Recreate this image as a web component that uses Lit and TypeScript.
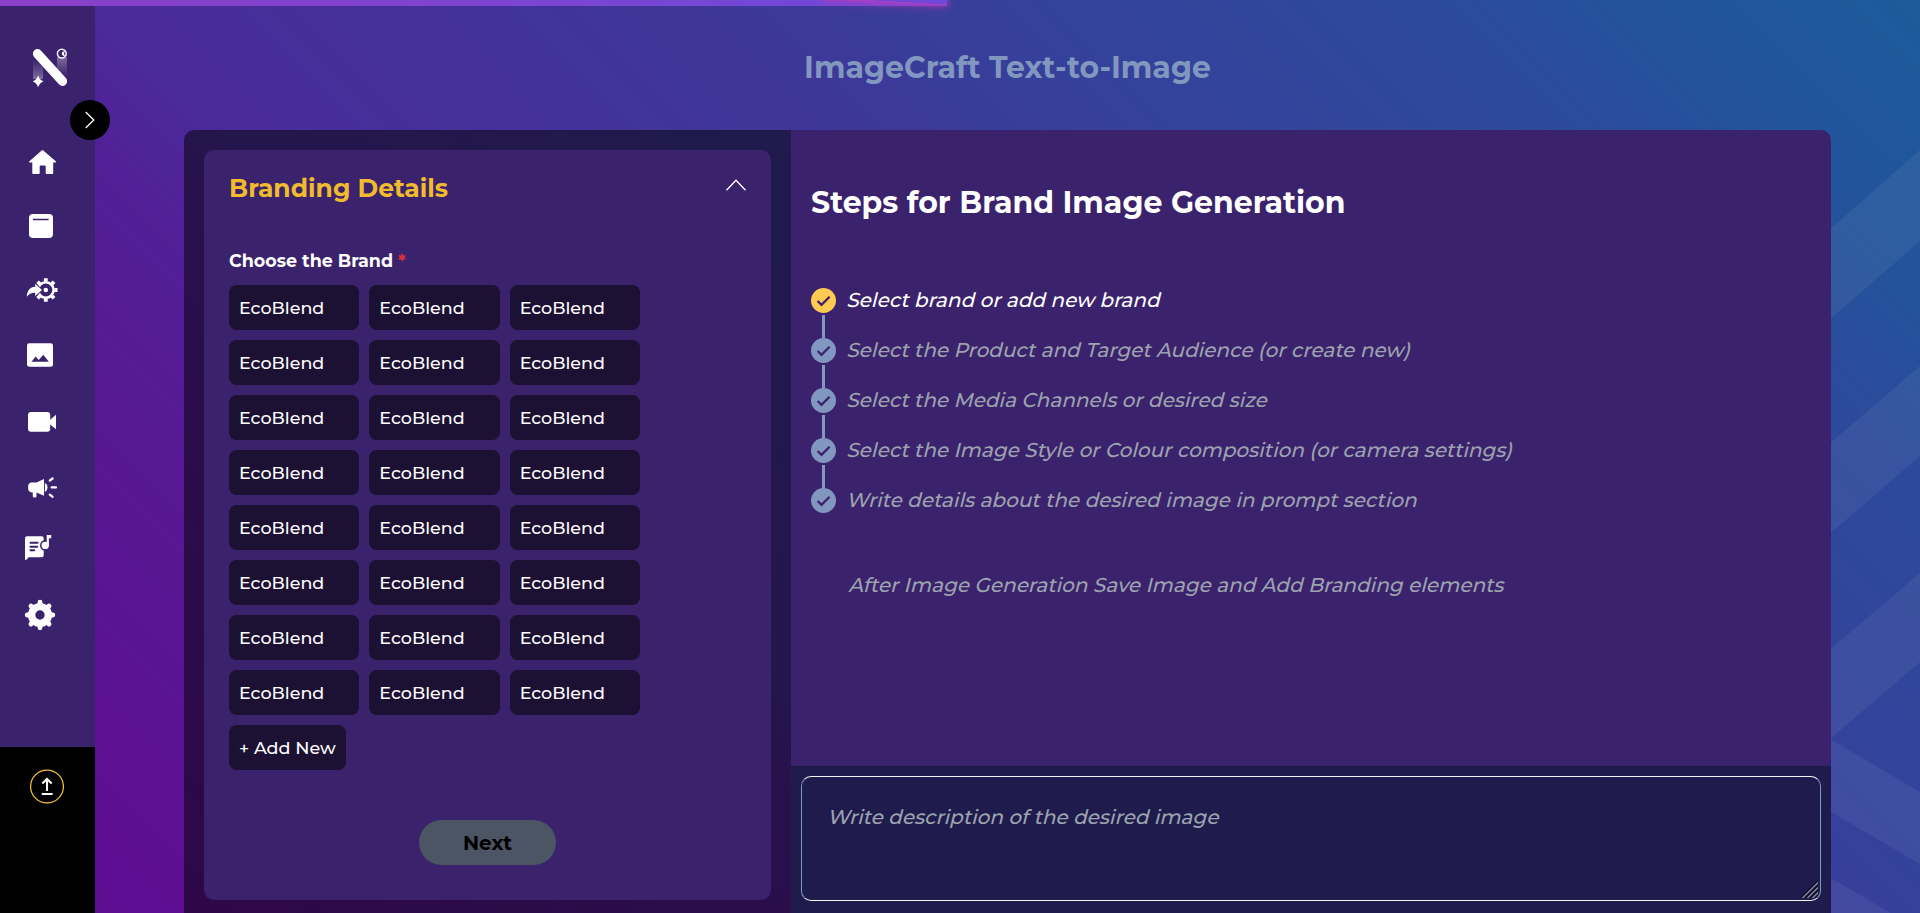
import { LitElement, html, css, svg } from 'lit';
import { customElement, property } from 'lit/decorators.js';
import { classMap } from 'lit/directives/class-map.js';

/** Short radial strokes around a centre, used as gear teeth. */
const teeth = (cx: number, cy: number, r1: number, r2: number, n: number, skip: number[] = []) =>
  Array.from({ length: n }, (_, i) => {
    if (skip.includes(i)) return '';
    const a = (i * 2 * Math.PI) / n;
    const p = (r: number) => `${(cx + r * Math.cos(a)).toFixed(2)} ${(cy + r * Math.sin(a)).toFixed(2)}`;
    return `M${p(r1)}L${p(r2)}`;
  }).join('');

const ICONS: Record<string, unknown> = {
  home: svg`<path d="M21.7 8.4q.8-.7 1.6 0L36 19.6q.5.8-.5.8H33.2V30.9q0 1.2-1.2 1.2H26.8q-1.1 0-1.1-1.1V24.4q0-.9-.9-.9H20.6q-.9 0-.9.9V31q0 1.1-1.1 1.1H13.5q-1.2 0-1.2-1.2V20.4H9.6q-1.1 0-.5-.8Z" fill="#fff"/>`,
  book: svg`<rect x="9" y="8" width="24" height="24" rx="4" fill="#fff"/><path d="M13 13.5H28.6" stroke="#3b226c" stroke-width="1.5"/>`,
  share: svg`
    <circle cx="25.8" cy="20" r="7.8" fill="none" stroke="#fff" stroke-width="2.6"/>
    <path d=${teeth(25.8, 20, 8.6, 11.7, 8, [4])} stroke="#fff" stroke-width="3.8"/>
    <circle cx="25.8" cy="20" r="2.3" fill="#fff"/>
    <path d="M6.8 26.8C7 20.6 10 17.2 15.2 16.8V13.8L22 20L15.2 26V22.8C11.6 22.6 9 23.8 6.8 26.8Z" fill="#fff" stroke="#3b226c" stroke-width="1.8" paint-order="stroke"/>`,
  image: svg`<rect x="7" y="8.2" width="26" height="23.6" rx="2.4" fill="#fff"/><path d="M11.5 26.8L15.7 21.4L18.7 24.9L23.3 19.8L28.8 26.8Z" fill="#3b226c"/>`,
  video: svg`<rect x="8" y="10" width="22.2" height="19.8" rx="3" fill="#fff"/><path d="M29 18.8L36 12.8V27.2L29 21.4Z" fill="#fff"/>`,
  mega: svg`<path d="M12 14.6H16.5L24 11V27.8L16.5 24.4V28.2Q16.5 29.4 15.3 29.4H14Q12.8 29.4 12.8 28.2V24.4H12Q8.2 24.2 8.2 20.8V18Q8.2 14.8 12 14.6Z" fill="#fff"/>
    <path d="M24.9 14.8Q27.6 16.4 27.6 19.5T24.9 24.2Z" fill="#fff"/>
    <path d="M29.8 12.5L32.6 10.5M31.6 19.4H36M29.8 26.7L32.6 28.9" stroke="#fff" stroke-width="2.2" stroke-linecap="round"/>`,
  chat: svg`<path d="M5 10.3Q5 8.3 7 8.3H21.7Q23.7 8.3 23.7 10.3V27.3Q23.7 29.3 21.7 29.3H8.6L6.4 31.8Q5 32.4 5 31Z" fill="#fff"/>
    <path d="M10.4 14.7H17.6M10.4 18.7H17.2M10.4 22.3H14.3" stroke="#3b226c" stroke-width="1.9" stroke-linecap="round"/>
    <circle cx="25.4" cy="17.4" r="5.4" fill="#3b226c"/>
    <circle cx="25.2" cy="17.4" r="3.7" fill="#fff"/><path d="M26.7 17.5V7H31.2V10.2H28.9V17.5Z" fill="#fff"/>`,
  gear: svg`<circle cx="20" cy="20" r="8.4" fill="none" stroke="#fff" stroke-width="7.4"/>
    <path d=${teeth(20, 20, 10.6, 12.8, 8)} stroke="#fff" stroke-width="4.8" stroke-linecap="round"/>`,
};

@customElement('side-bar')
class SideBar extends LitElement {
  static styles = css`
    :host { display: flex; flex-direction: column; width: 95px; height: 913px; flex: none; }
    .top { display: flow-root; height: 747px; background: #3b226c; }
    .logo { display: block; margin: 40px 0 0 25px; }
    .nav { display: flex; flex-direction: column; padding: 47px 0 0 20px; }
    .nav svg { display: block; }
    .gap-24 { margin-top: 24px; }
    .gap-25 { margin-top: 25px; }
    .gap-27 { margin-top: 27px; }
    .gap-26 { margin-top: 26px; }
    .gap-20 { margin-top: 20px; }
    .bottom { flex: 1; background: #000; padding: 22px 0 0 30px; }
    .upload { display: block; }
  `;
  render() {
    const items: [string, string][] = [
      ['home', ''], ['book', 'gap-24'], ['share', 'gap-24'], ['image', 'gap-25'],
      ['video', 'gap-27'], ['mega', 'gap-26'], ['chat', 'gap-20'], ['gear', 'gap-27'],
    ];
    return html`
      <div class="top">
        <svg class="logo" width="55" height="55" viewBox="25 40 55 55">
          <defs>
            <linearGradient id="up" x1="0" y1="1" x2="0" y2="0"><stop offset="0" stop-color="#fff" stop-opacity=".34"/><stop offset="1" stop-color="#fff" stop-opacity="0"/></linearGradient>
            <linearGradient id="down" x1="0" y1="0" x2="0" y2="1"><stop offset="0" stop-color="#fff" stop-opacity=".34"/><stop offset="1" stop-color="#fff" stop-opacity="0"/></linearGradient>
          </defs>
          <rect x="33" y="60" width="10" height="19" fill="url(#up)"/>
          <rect x="57" y="57" width="10" height="19" fill="url(#down)"/>
          <path d="M37.6 53.8L62.4 81.2" stroke="#fff" stroke-width="9.4" stroke-linecap="round"/>
          <circle cx="61.8" cy="53.6" r="5.2" fill="#3b226c"/>
          <circle cx="61.8" cy="53.6" r="4.4" fill="none" stroke="#fff" stroke-width="1.5"/>
          <path d="M64.9 51.5A2.3 2.3 0 1 0 64.9 55.8L63.9 53.7Z" fill="#fff"/>
          <path d="M38.1 75.4Q39.6 79.8 43.6 81.3Q39.6 82.8 38.1 87.2Q36.6 82.8 32.6 81.3Q36.6 79.8 38.1 75.4Z" fill="#fff"/>
        </svg>
        <div class="nav">
          ${items.map(([n, c]) => html`<svg class=${c} width="40" height="40" viewBox="0 0 40 40">${ICONS[n]}</svg>`)}
        </div>
      </div>
      <div class="bottom">
        <svg class="upload" width="34" height="35" viewBox="0 0 34 35">
          <circle cx="17" cy="17.5" r="16.4" fill="none" stroke="#f4bc3c" stroke-width="1.25"/>
          <path d="M17 22V10.5M12.3 14.6L17 9.9L21.7 14.6M11.8 25H22.6" fill="none" stroke="#fff" stroke-width="2.1"/>
        </svg>
      </div>`;
  }
}

@customElement('brand-panel')
class BrandPanel extends LitElement {
  static styles = css`
    :host { display: block; width: 607px; padding: 20px; box-sizing: border-box; background: rgba(0, 0, 0, 0.5); border-radius: 10px 0 0 0; flex: none; }
    .card { box-sizing: border-box; height: 750px; width: 567px; background: #3b226c; border-radius: 10px; padding: 20px 25px 35px; display: flex; flex-direction: column; }
    .head { display: flex; justify-content: space-between; align-items: flex-start; height: 78px; }
    h2 { margin: 1px 0 0; font-size: 25px; line-height: 35px; font-weight: 700; color: #f0bb2d; }
    .chev { margin-top: 9px; }
    .label { font-size: 17.5px; line-height: 25px; font-weight: 700; color: #fff; margin-bottom: 12px; }
    .star { color: #dc2f3c; }
    .brands { width: 411px; display: grid; grid-template-columns: repeat(3, 1fr); gap: 10px; }
    .chip { box-sizing: border-box; height: 45px; padding: 10px; border-radius: 7.5px; background: #1c1033; color: #fff; font: 500 17.5px/25px Montserrat, Inter, sans-serif; border: 0; text-align: left; white-space: nowrap; }
    .add { align-self: flex-start; margin-top: 10px; }
    .next { align-self: center; margin-top: auto; width: 137px; height: 45px; border: 0; border-radius: 25px; background: #4b5563; color: #000; font: 700 20px/30px Montserrat, Inter, sans-serif; }
  `;
  @property({ type: Array }) brands: string[] = Array(24).fill('EcoBlend');
  render() {
    return html`
      <div class="card">
        <div class="head">
          <h2>Branding Details</h2>
          <svg class="chev" width="20" height="12" viewBox="0 0 20 12"><path d="M.5 11.2L10 1.2L19.5 11.2" fill="none" stroke="#fff" stroke-width="1.3"/></svg>
        </div>
        <div class="label">Choose the Brand <span class="star">*</span></div>
        <div class="brands">${this.brands.map((b) => html`<button class="chip">${b}</button>`)}</div>
        <button class="chip add">+ Add New</button>
        <button class="next">Next</button>
      </div>`;
  }
}

@customElement('steps-panel')
class StepsPanel extends LitElement {
  static styles = css`
    :host { display: flex; flex-direction: column; width: 1040px; border-radius: 0 10px 0 0; overflow: hidden; }
    .guide { box-sizing: border-box; height: 636px; background: #3b226c; padding: 53px 20px 0; }
    h2 { margin: 0 0 65px; font-size: 30px; line-height: 40px; font-weight: 700; color: #fff; }
    .slanted { display: block; width: max-content; font-size: 20px; font-weight: 500; line-height: 25px; transform: skewX(-14deg); transform-origin: 0 19.7px; }
    .step { display: flex; height: 50px; gap: 10px; color: #9ca3af; }
    .active { color: #fff; }
    .mark { display: flex; flex-direction: column; align-items: center; width: 25px; }
    .mark svg { display: block; }
    .dot { fill: #8297bf; }
    .active .dot { fill: #ffca50; }
    .line { width: 2.5px; height: 23px; margin-top: 2px; background: #8297bf; }
    .after { margin: 35px 0 0 37px; color: #9ca3af; }
    .prompt { height: 147px; box-sizing: border-box; padding: 10px; background: #1f1c4d; display: grid; grid-template: 125px / 1020px; }
    .prompt > * { grid-area: 1 / 1; }
    .hint { margin: 29px 0 0 26px; height: 25px; color: #9ca3af; pointer-events: none; }
    .grip { align-self: end; justify-self: end; margin: 0 2px 2px 0; }
    textarea { display: block; box-sizing: border-box; width: 1020px; height: 125px; margin: 0; padding: 25px; background: transparent; border: 1px solid #8297bf; border-top-color: #f3f4f6; border-bottom-color: #f3f4f6; border-radius: 10px; resize: none; font: italic 500 20px/30px Montserrat, Inter, sans-serif; color: #fff; }
  `;
  steps = [
    'Select brand or add new brand',
    'Select the Product and Target Audience (or create new)',
    'Select the Media Channels or desired size',
    'Select the Image Style or Colour composition (or camera settings)',
    'Write details about the desired image in prompt section',
  ];
  render() {
    return html`
      <div class="guide">
        <h2>Steps for Brand Image Generation</h2>
        ${this.steps.map((s, i) => html`
          <div class=${classMap({ step: true, active: i === 0 })}>
            <div class="mark">
              <svg width="25" height="25" viewBox="0 0 25 25"><circle class="dot" cx="12.5" cy="12.5" r="12.5"/><path d="M6.6 13L10.5 16.8L18.6 8.7" fill="none" stroke="#3b226c" stroke-width="2.3"/></svg>
              ${i < this.steps.length - 1 ? html`<div class="line"></div>` : ''}
            </div>
            <span class="slanted">${s}</span>
          </div>`)}
        <div class="after slanted">After Image Generation Save Image and Add Branding elements</div>
      </div>
      <div class="prompt">
        <textarea></textarea>
        <span class="hint slanted">Write description of the desired image</span>
        <svg class="grip" width="18" height="18" viewBox="0 0 18 18" fill="none">
          <path d="M0 16.5L16.5 0M5 16.5L16.5 5M10 16.5L16.5 10" stroke="#0b0a20" stroke-width="1.2"/>
          <path d="M1.5 17L17 1.5M6.5 17L17 6.5M11.5 17L17 11.5" stroke="#8d8ca0" stroke-width="1.2"/>
        </svg>
      </div>`;
  }
}

@customElement('app-root')
class AppRoot extends LitElement {
  static styles = css`
    :host {
      display: flex; position: relative; width: 1920px; height: 913px; overflow: hidden;
      font-family: Montserrat, Inter, sans-serif;
      background: linear-gradient(45deg, #5f0c92 0%, #5e0e92 5.8%, #571893 21%, #521f97 30%, #4a2b9a 35.6%, #3e3798 57%, #35419b 68%, #2c4a9b 83%, #23539b 90%, #1c5b9c 100%);
    }
    .rays { position: absolute; left: 0; top: 0; }
    side-bar, main { position: relative; }
    main { flex: 1; display: flex; flex-direction: column; }
    h1 { margin: 0; padding: 48px 0 42px 57px; text-align: center; width: 1768px; font-size: 30px; line-height: 40px; font-weight: 700; color: #8297bf; box-sizing: border-box; }
    .work { display: flex; margin-left: 89px; height: 783px; }
    .toggle { position: absolute; left: 70px; top: 100px; }
    .progress { position: absolute; left: 0; top: 0; width: 946.5px; height: 6px; background: linear-gradient(90deg, #8b3fc8, #6f49d9); overflow: visible; }
    .peg { position: absolute; right: 0; width: 125px; height: 100%; box-shadow: 0 0 12px #c23bb8, 0 0 6px #c23bb8; transform: rotate(3deg) translate(0, -5px); }
  `;
  render() {
    return html`
      <svg class="rays" width="1920" height="913" viewBox="0 0 1920 913">
        <g fill="#fff" fill-opacity=".06">
          <path d="M1820 238L1920 150V241L1820 328Z"/>
          <path d="M1820 452L1920 366V456L1820 542Z"/>
          <path d="M1820 658L1920 573V662L1831 738L1820 748Z"/>
          <path d="M1831 739.5L1920 792V864L1831 812Z"/>
          <path d="M1831 878L1920 930H1831Z"/>
        </g>
      </svg>
      <side-bar></side-bar>
      <main>
        <h1>ImageCraft Text-to-Image</h1>
        <div class="work"><brand-panel></brand-panel><steps-panel></steps-panel></div>
      </main>
      <svg class="toggle" width="40" height="40" viewBox="0 0 40 40"><circle cx="20" cy="20" r="20"/><path d="M15.7 12L23.8 20L15.7 28" fill="none" stroke="#fff" stroke-width="1.3"/></svg>
      <div class="progress"><div class="peg"></div></div>`;
  }
}
